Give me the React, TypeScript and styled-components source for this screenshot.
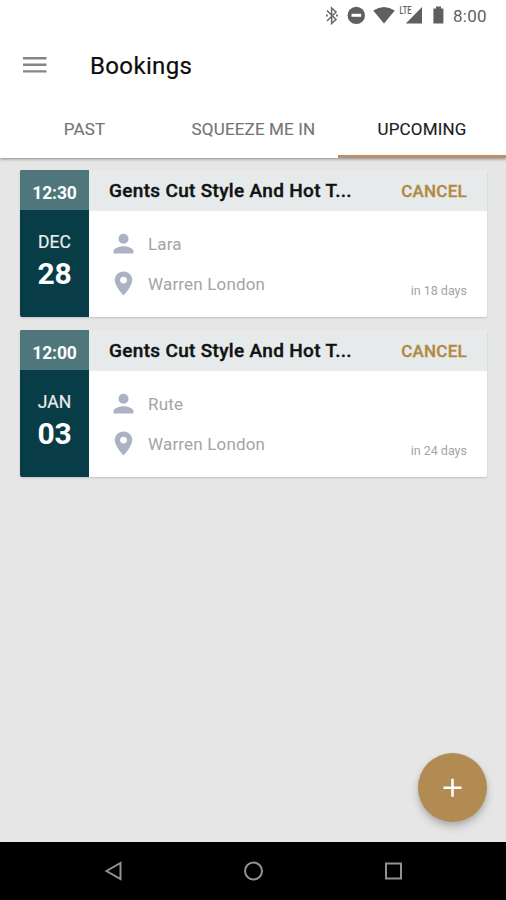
import React from "react";
import styled, { createGlobalStyle } from "styled-components";

const GlobalStyle = createGlobalStyle`
  * { box-sizing: border-box; }
  body { margin: 0; font-family: Roboto, "Liberation Sans", sans-serif; background: #e6e6e6; }
  button { font: inherit; border: 0; padding: 0; background: none; }
  svg { display: block; flex: none; }
`;

const Screen = styled.div`
  width: 506px;
  height: 900px;
  display: flex;
  flex-direction: column;
  background: #e6e6e6;
  overflow: hidden;
`;

const Header = styled.header`
  height: 158px;
  flex: none;
  background: #fff;
  box-shadow: 0 1px 3px rgba(0, 0, 0, 0.42);
  z-index: 1;
`;

const StatusBar = styled.div`
  height: 32px;
  padding-left: 325px;
  display: flex;
  align-items: center;
  color: #5f5f5f;
`;

const Clock = styled.span`
  margin-left: 7px;
  font-size: 17px;
  line-height: 32px;
  letter-spacing: 0.25px;
`;

const Toolbar = styled.div`
  height: 68px;
  padding: 0 23px;
  display: flex;
  align-items: center;
`;

const Title = styled.h1`
  margin: 0 0 0 43px;
  font-size: 24px;
  line-height: 30px;
  font-weight: 400;
  letter-spacing: 0.35px;
  color: #0c0c0c;
  -webkit-text-stroke: 0.2px #0c0c0c;
`;

const Tabs = styled.nav`
  height: 58px;
  display: grid;
  grid-template-columns: 169px 169px 168px;
`;

const Tab = styled.button<{ $active?: boolean }>`
  height: 58px;
  padding-top: 3px;
  font-size: 17px;
  line-height: 20px;
  letter-spacing: 0.16px;
  color: ${(p) => (p.$active ? "#1b1b1b" : "#747474")};
  -webkit-text-stroke: 0.15px currentColor;
  border-bottom: 3px solid ${(p) => (p.$active ? "#bd906b" : "transparent")};
`;

const List = styled.main`
  flex: 1;
  padding: 12px 19px 0 20px;
  display: flex;
  flex-direction: column;
  gap: 13px;
`;

const Card = styled.article`
  height: 147px;
  display: grid;
  grid-template-columns: 69px 1fr;
  background: #fff;
  border-radius: 2px;
  overflow: hidden;
  box-shadow: 0 1px 2px rgba(0, 0, 0, 0.16);
`;

const DateColumn = styled.div`
  background: #083c46;
  color: #fff;
  text-align: center;
`;

const Time = styled.div`
  height: 40px;
  padding-top: 2px;
  background: #4e767b;
  font-size: 17.5px;
  font-weight: 700;
  line-height: 42px;
  letter-spacing: -0.1px;
`;

const Month = styled.div`
  margin-top: 21px;
  font-size: 17.5px;
  line-height: 22px;
  color: #e9eeee;
  -webkit-text-stroke: 0.2px #e9eeee;
`;

const Day = styled.div`
  margin-top: 4px;
  font-size: 30px;
  font-weight: 700;
  line-height: 34px;
  letter-spacing: -0.3px;
`;

const Details = styled.div`
  display: flex;
  flex-direction: column;
`;

const CardHeader = styled.div`
  height: 41px;
  padding: 0 20px;
  display: flex;
  align-items: center;
  justify-content: space-between;
  background: #e6eaea;
`;

const Service = styled.h2`
  margin: 0;
  width: 250px;
  padding-top: 1px;
  font-size: 19px;
  font-weight: 500;
  line-height: 40px;
  letter-spacing: 0.32px;
  color: #101314;
  -webkit-text-stroke: 0.4px #101314;
  white-space: nowrap;
`;

const Cancel = styled.button`
  font-size: 17px;
  font-weight: 500;
  line-height: 40px;
  letter-spacing: 0.25px;
  color: #b38942;
  -webkit-text-stroke: 0.3px #b38942;
`;

const CardBody = styled.div`
  flex: 1;
  padding: 13px 20px 0 23px;
  display: flex;
  justify-content: space-between;
`;

const Facts = styled.div`
  display: flex;
  flex-direction: column;
`;

const Fact = styled.div`
  height: 40px;
  display: flex;
  align-items: center;
  gap: 13px;
  font-size: 17px;
  letter-spacing: 0.17px;
  color: #a4a4a4;
`;

const Countdown = styled.span`
  margin-top: 59px;
  font-size: 12.5px;
  line-height: 16px;
  color: #a4a4a4;
`;

const ActionRow = styled.div`
  height: 89px;
  flex: none;
  padding-right: 19px;
  display: flex;
  justify-content: flex-end;
`;

const AddButton = styled.button`
  width: 69px;
  height: 69px;
  border-radius: 50%;
  display: grid;
  place-items: center;
  background: #b28b52;
  box-shadow: 0 5px 8px rgba(0, 0, 0, 0.2), 0 2px 4px rgba(0, 0, 0, 0.08);
`;

const NavBar = styled.footer`
  height: 58px;
  flex: none;
  padding: 0 102px;
  display: flex;
  align-items: center;
  justify-content: space-between;
  background: #000;
`;

const StatusIcons = () => (
  <svg width="121" height="24" viewBox="325 4 121 24" fill="#5f5f5f">
    <path d="M327 10.5L336 19.5L331.6 23.5V8L336 12L327 21" fill="none" stroke="#696969" strokeWidth="1.5" />
    <path d="M326 15.5h1.8M336 15.5h1.8" stroke="#696969" strokeWidth="1.8" />
    <circle cx="356.3" cy="15.4" r="8.7" />
    <rect x="351.5" y="13.8" width="9.6" height="3" fill="#fff" />
    <path d="M373.2 10.5Q384 3.5 394.8 10.5L384 23.4Z" />
    <path d="M422 7V23.4H405.8Z" />
    <text x="399.5" y="14.3" fontFamily="Roboto" fontSize="10" fontWeight="500" textLength="12" lengthAdjust="spacingAndGlyphs">LTE</text>
    <path d="M436 6.5h5v2h2.4V23.5h-10V8.500h2.600z" />
  </svg>
);

const MenuIcon = () => (
  <svg width="24" height="18" viewBox="0 0 24 18" stroke="#858585" strokeWidth="2.4">
    <path d="M0 1.200H23.500M0 7.800H23.500M0 14.400H23.500" />
  </svg>
);

const PersonIcon = () => (
  <svg width="23" height="26" viewBox="0 0 23 26" fill="#abb2c3">
    <circle cx="11.500" cy="7.800" r="5" />
    <path d="M1.500 22.600v-2.300c0-3.500 6.700-5.100 10-5.100s10 1.600 10 5.100v2.300z" />
  </svg>
);

const PinIcon = () => (
  <svg width="23" height="26" viewBox="0 0 23 26">
    <path fill="#abb2c3" fillRule="evenodd" d="M11.500.4C6.500.4 2.700 4.300 2.700 9.100c0 6.400 8.800 15.500 8.800 15.500s8.800-9.100 8.800-15.500C20.300 4.300 16.500.4 11.500.4zm0 5.300a3.400 3.400 0 1 1 0 6.800a3.400 3.400 0 0 1 0-6.800z" />
  </svg>
);

const bookings = [
  { time: "12:30", month: "DEC", day: "28", stylist: "Lara", due: "in 18 days" },
  { time: "12:00", month: "JAN", day: "03", stylist: "Rute", due: "in 24 days" },
];

export default function App() {
  return (
    <Screen>
      <GlobalStyle />
      <Header>
        <StatusBar>
          <StatusIcons />
          <Clock>8:00</Clock>
        </StatusBar>
        <Toolbar>
          <MenuIcon />
          <Title>Bookings</Title>
        </Toolbar>
        <Tabs>
          <Tab>PAST</Tab>
          <Tab>SQUEEZE ME IN</Tab>
          <Tab $active>UPCOMING</Tab>
        </Tabs>
      </Header>
      <List>
        {bookings.map((b) => (
          <Card key={b.time}>
            <DateColumn>
              <Time>{b.time}</Time>
              <Month>{b.month}</Month>
              <Day>{b.day}</Day>
            </DateColumn>
            <Details>
              <CardHeader>
                <Service>Gents Cut Style And Hot T...</Service>
                <Cancel>CANCEL</Cancel>
              </CardHeader>
              <CardBody>
                <Facts>
                  <Fact><PersonIcon />{b.stylist}</Fact>
                  <Fact><PinIcon />Warren London</Fact>
                </Facts>
                <Countdown>{b.due}</Countdown>
              </CardBody>
            </Details>
          </Card>
        ))}
      </List>
      <ActionRow>
        <AddButton aria-label="Add booking">
          <svg width="20" height="20" viewBox="0 0 20 20" stroke="#fff" strokeWidth="2.500">
            <path d="M9.500 .7v18M.5 9.700h18" />
          </svg>
        </AddButton>
      </ActionRow>
      <NavBar>
        <svg width="22" height="22" viewBox="0 0 22 22" fill="none" stroke="#929292" strokeWidth="2">
          <path d="M4.500 11L18.500 3V19Z" />
        </svg>
        <svg width="22" height="22" viewBox="0 0 22 22" fill="none" stroke="#929292" strokeWidth="2">
          <circle cx="11.500" cy="11" r="8.500" />
        </svg>
        <svg width="22" height="22" viewBox="0 0 22 22" fill="none" stroke="#929292" strokeWidth="2">
          <rect x="4" y="3.500" width="15" height="15" />
        </svg>
      </NavBar>
    </Screen>
  );
}
